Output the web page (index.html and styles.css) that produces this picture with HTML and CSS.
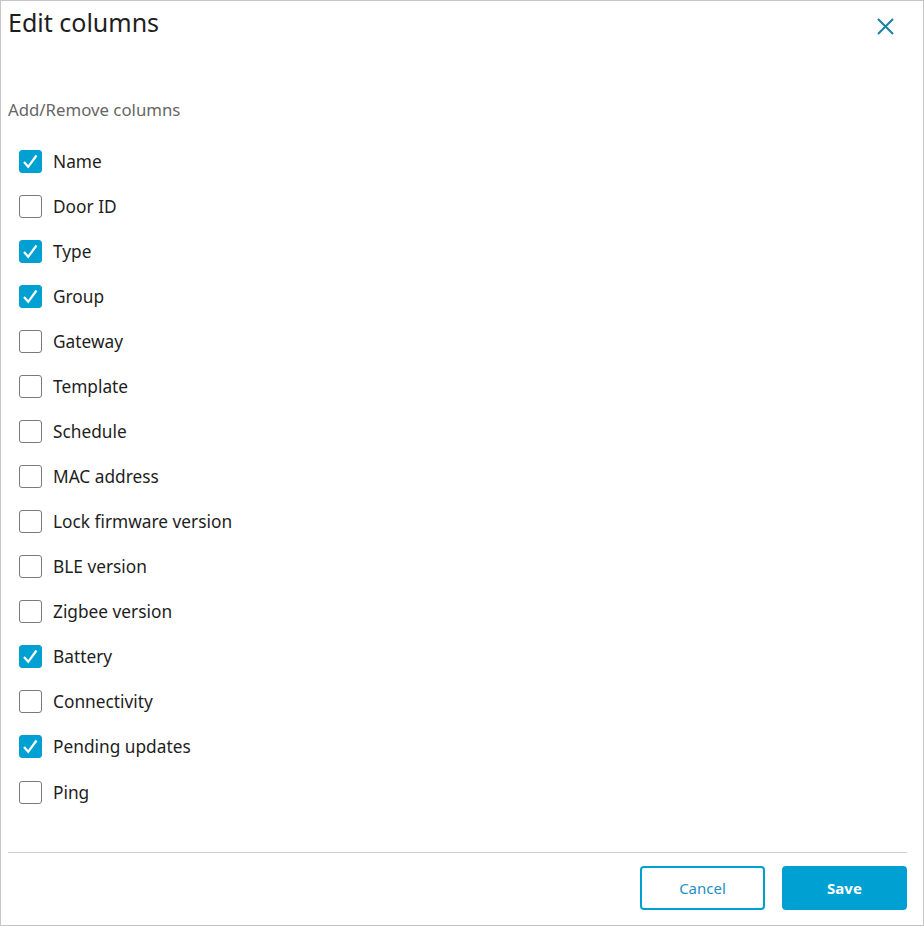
FILE: index.html
```html
<!DOCTYPE html>
<html lang="en">
<head>
    <meta charset="UTF-8">
    <title>Edit columns</title>
    <link rel="stylesheet" href="styles.css">
</head>
<body>

<div class="dialog">
    <div class="dialog-header">
        <h2>Edit columns</h2>
        <button class="close-btn" type="button" aria-label="Close">
            <svg width="17" height="17" viewBox="0 0 17 17">
                <path d="M1 1 L16 16 M16 1 L1 16" stroke="#1b7fa6" stroke-width="2" fill="none"/>
            </svg>
        </button>
    </div>

    <div class="dialog-body">
        <p class="subtitle">Add/Remove columns</p>

        <!-- each box holds the same check svg, shown only when ticked -->
        <ul class="column-list">
            <li><label><input type="checkbox" checked><span class="box"><svg viewBox="0 0 23 23"><path d="M5 12 L9.2 16.8 L17.5 5.5"/></svg></span>Name</label></li>
            <li><label><input type="checkbox"><span class="box"><svg viewBox="0 0 23 23"><path d="M5 12 L9.2 16.8 L17.5 5.5"/></svg></span>Door ID</label></li>
            <li><label><input type="checkbox" checked><span class="box"><svg viewBox="0 0 23 23"><path d="M5 12 L9.2 16.8 L17.5 5.5"/></svg></span>Type</label></li>
            <li><label><input type="checkbox" checked><span class="box"><svg viewBox="0 0 23 23"><path d="M5 12 L9.2 16.8 L17.5 5.5"/></svg></span>Group</label></li>
            <li><label><input type="checkbox"><span class="box"><svg viewBox="0 0 23 23"><path d="M5 12 L9.2 16.8 L17.5 5.5"/></svg></span>Gateway</label></li>
            <li><label><input type="checkbox"><span class="box"><svg viewBox="0 0 23 23"><path d="M5 12 L9.2 16.8 L17.5 5.5"/></svg></span>Template</label></li>
            <li><label><input type="checkbox"><span class="box"><svg viewBox="0 0 23 23"><path d="M5 12 L9.2 16.8 L17.5 5.5"/></svg></span>Schedule</label></li>
            <li><label><input type="checkbox"><span class="box"><svg viewBox="0 0 23 23"><path d="M5 12 L9.2 16.8 L17.5 5.5"/></svg></span>MAC address</label></li>
            <li><label><input type="checkbox"><span class="box"><svg viewBox="0 0 23 23"><path d="M5 12 L9.2 16.8 L17.5 5.5"/></svg></span>Lock firmware version</label></li>
            <li><label><input type="checkbox"><span class="box"><svg viewBox="0 0 23 23"><path d="M5 12 L9.2 16.8 L17.5 5.5"/></svg></span>BLE version</label></li>
            <li><label><input type="checkbox"><span class="box"><svg viewBox="0 0 23 23"><path d="M5 12 L9.2 16.8 L17.5 5.5"/></svg></span>Zigbee version</label></li>
            <li><label><input type="checkbox" checked><span class="box"><svg viewBox="0 0 23 23"><path d="M5 12 L9.2 16.8 L17.5 5.5"/></svg></span>Battery</label></li>
            <li><label><input type="checkbox"><span class="box"><svg viewBox="0 0 23 23"><path d="M5 12 L9.2 16.8 L17.5 5.5"/></svg></span>Connectivity</label></li>
            <li><label><input type="checkbox" checked><span class="box"><svg viewBox="0 0 23 23"><path d="M5 12 L9.2 16.8 L17.5 5.5"/></svg></span>Pending updates</label></li>
            <li class="last"><label><input type="checkbox"><span class="box"><svg viewBox="0 0 23 23"><path d="M5 12 L9.2 16.8 L17.5 5.5"/></svg></span>Ping</label></li>
        </ul>
    </div>

    <div class="dialog-footer">
        <button type="button" class="btn btn-cancel">Cancel</button>
        <button type="button" class="btn btn-save">Save</button>
    </div>
</div>

</body>
</html>
```

FILE: styles.css
```css
body {
    margin: 0;
    font-family: "Noto Sans", "Open Sans", sans-serif;
    color: #222;
    background: white;
}

.dialog {
    box-sizing: border-box;
    width: 924px;
    height: 926px;
    border: 1px solid #c6c6c6;
    display: flex;
    flex-direction: column;
}

.dialog-header {
    display: flex;
    justify-content: space-between;
    align-items: flex-start;
    padding: 4px 29px 0 7px;
}

h2 {
    margin: 0;
    font-size: 25px;
    font-weight: normal;
    line-height: 34px;
    color: #1e1e1e;
}

.close-btn {
    border: none;
    background: none;
    padding: 0;
    margin-top: 13px;
    width: 17px;
    height: 17px;
    cursor: pointer;
}

.close-btn svg {
    display: block;
}

.dialog-body {
    flex: 1;
    padding: 0 7px;
}

.subtitle {
    margin: 60px 0 18px;
    font-size: 16.8px;
    line-height: 22px;
    color: #666;
}

.column-list {
    list-style: none;
    margin: 0;
    padding: 0 0 0 11px;
}

.column-list li {
    height: 45px;
    display: flex;
    align-items: center;
}

.column-list li.last {
    margin-top: 1px;
}

.column-list label {
    display: flex;
    align-items: center;
    font-size: 17.3px;
    color: #1e1e1e;
    cursor: pointer;
}

.column-list input {
    display: none;
}

.box {
    box-sizing: border-box;
    width: 23px;
    height: 23px;
    border: 1px solid #7a7a7a;
    border-radius: 3px;
    margin-right: 11px;
    position: relative;
}

.box svg {
    display: none;
    position: absolute;
    top: -1px;
    left: -1px;
    width: 23px;
    height: 23px;
    fill: none;
    stroke: white;
    stroke-width: 2.2;
}

.column-list input:checked + .box {
    background-color: #00a1d2;
    border-color: #00a1d2;
}

.column-list input:checked + .box svg {
    display: block;
}

.dialog-footer {
    margin: 0 16px 0 7px;
    border-top: 1px solid #cfcfcf;
    padding: 13px 0 15px;
    display: flex;
    justify-content: flex-end;
    gap: 17px;
}

.btn {
    box-sizing: border-box;
    width: 125px;
    height: 44px;
    border-radius: 4px;
    font-family: "Noto Sans", "Open Sans", sans-serif;
    font-size: 15px;
    cursor: pointer;
}

.btn-cancel {
    background: white;
    border: 2px solid #00a1d2;
    color: #1f8fbf;
}

.btn-save {
    background-color: #00a1d2;
    border: none;
    color: white;
    font-weight: bold;
}
```
